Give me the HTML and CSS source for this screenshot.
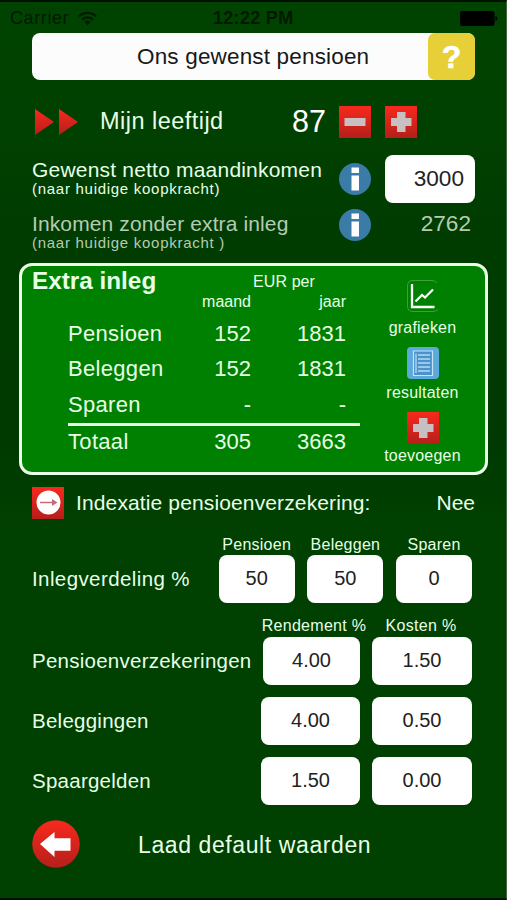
FILE: index.html
```html
<!DOCTYPE html>
<html lang="nl">
<head>
<meta charset="utf-8">
<title>Ons gewenst pensioen</title>
<link rel="stylesheet" href="styles.css">
</head>
<body>
<svg class="defs" width="0" height="0" aria-hidden="true">
  <defs>
    <linearGradient id="red" x1="0" y1="0" x2="0" y2="1">
      <stop offset="0" stop-color="#f8291d"/><stop offset="1" stop-color="#b51f1b"/>
    </linearGradient>
    <symbol id="plus" viewBox="0 0 32 32">
      <rect width="32" height="32" fill="url(#red)"/>
      <path d="M12 6h8.500v6h6v8h-6v6H12v-6H6v-8h6z" fill="#c8c0c0"/>
    </symbol>
    <symbol id="info" viewBox="0 0 32 32">
      <circle cx="16" cy="16" r="16" fill="#3a7ba8"/>
      <path d="M12.500 4.500h7.500v5.500h-7.500zM12.500 12.500h7.500v15h-7.500z" fill="#fff"/>
    </symbol>
  </defs>
</svg>
<div class="screen">
  <header class="status">
    <span class="carrier">Carrier</span>
    <svg class="wifi" width="19" height="15" viewBox="0 0 19 15">
      <path d="M1 5.300a12.200 12.200 0 0 1 17 0M4 8.600a7.800 7.800 0 0 1 11 0" fill="none" stroke="#001a00" stroke-width="2.300"/>
      <path d="M6.300 10.900a4.600 4.600 0 0 1 6.400 0L9.500 14.200z" fill="#001a00"/>
    </svg>
    <span class="clock">12:22 PM</span>
    <svg class="battery" width="38" height="15" viewBox="0 0 38 15"><rect width="34.500" height="15" rx="2.500"/><path d="M35.500 5a2.600 2.600 0 0 1 0 5z"/></svg>
  </header>

  <div class="title"><h1>Ons gewenst pensioen</h1><button class="help">?</button></div>

  <section class="age">
    <svg width="44" height="28" viewBox="0 0 44 28"><path d="M1 1l19 13L1 27zM25 1l19 13-19 13z" fill="url(#red)"/></svg>
    <span class="age-label">Mijn leeftijd</span>
    <span class="age-value">87</span>
    <svg width="32" height="32" viewBox="0 0 32 32"><rect width="32" height="32" fill="url(#red)"/><path d="M5.500 12h21v8h-21z" fill="#c8c0c0"/></svg>
    <svg class="age-plus" width="32" height="32"><use href="#plus"/></svg>
  </section>

  <section class="income">
    <div class="income-label"><span class="main m1">Gewenst netto maandinkomen</span><small>(naar huidige koopkracht)</small></div>
    <svg width="32" height="32"><use href="#info"/></svg>
    <div class="field amount">3000</div>
  </section>
  <section class="income dim">
    <div class="income-label"><span class="main m2">Inkomen zonder extra inleg</span><small>(naar huidige koopkracht )</small></div>
    <svg width="32" height="32"><use href="#info"/></svg>
    <div class="plain">2762</div>
  </section>

  <section class="card">
    <div class="figures">
      <div class="card-head"><h2>Extra inleg</h2><span class="eur">EUR per</span></div>
      <div class="line heads"><span></span><span>maand</span><span>jaar</span></div>
      <div class="line"><span>Pensioen</span><span>152</span><span>1831</span></div>
      <div class="line"><span>Beleggen</span><span>152</span><span>1831</span></div>
      <div class="line last"><span>Sparen</span><span>-</span><span>-</span></div>
      <div class="line total"><span>Totaal</span><span>305</span><span>3663</span></div>
    </div>
    <nav class="actions">
      <div class="action">
        <svg width="32" height="32" viewBox="0 0 32 32"><path d="M30 3Q28 .5 25 .5H6Q.5 .5 .5 6v20q0 5.500 5.500 5.500h20q3 0 5-2" fill="none" stroke="#4fa64f" stroke-width=".8"/><path d="M5 4v23h22.500" fill="none" stroke="#fff" stroke-width="2.300"/><path d="M8.500 21.500l6.500-6.500 3 2.500 8-8" fill="none" stroke="#fff" stroke-width="2.200"/></svg>
        <span>grafieken</span>
      </div>
      <div class="action results">
        <svg width="32" height="32" viewBox="0 0 32 32"><rect width="32" height="32" rx="4" fill="#5da9db"/><path d="M6.500 4h19v24.500h-19z" fill="#4b92cb" stroke="#c2e5fa" stroke-width="1.200"/><path d="M9 6.500V26M11 8h12M11 12h12M11 16h12M11 20h12M11 24h12" fill="none" stroke="#b3dcf7" stroke-width="1.300"/></svg>
        <span>resultaten</span>
      </div>
      <div class="action add">
        <svg width="32" height="32"><use href="#plus"/></svg>
        <span>toevoegen</span>
      </div>
    </nav>
  </section>

  <section class="index-row">
    <svg width="32" height="32" viewBox="0 0 32 32"><rect width="32" height="32" fill="url(#red)"/><circle cx="16.500" cy="15.500" r="12" fill="#fff"/><path d="M8 15.500h13" stroke="#c36c78" stroke-width="1.500"/><path d="M20 12l5.500 3.500L20 19z" fill="#c36c78"/></svg>
    <span class="index-label">Indexatie pensioenverzekering:</span>
    <span class="index-value">Nee</span>
  </section>

  <section class="split">
    <span class="row-label split-label">Inlegverdeling %</span>
    <label>Pensioen<span class="field">50</span></label>
    <label>Beleggen<span class="field">50</span></label>
    <label>Sparen<span class="field">0</span></label>
  </section>

  <section class="rates">
    <div class="rate-heads"><span>Rendement %</span><span>Kosten %</span></div>
    <div class="rate first"><span class="row-label">Pensioenverzekeringen</span><span class="field">4.00</span><span class="field">1.50</span></div>
    <div class="rate"><span class="row-label">Beleggingen</span><span class="field">4.00</span><span class="field">0.50</span></div>
    <div class="rate"><span class="row-label">Spaargelden</span><span class="field">1.50</span><span class="field">0.00</span></div>
  </section>

  <footer class="reset">
    <svg width="48" height="48" viewBox="0 0 48 48"><circle cx="24" cy="24" r="23.800" fill="url(#red)"/><path d="M8 24L22.500 12v6.300h16v12.500h-16V37z" fill="#fff"/></svg>
    <span>Laad default waarden</span>
  </footer>
</div>
</body>
</html>
```

FILE: styles.css
```css
* { box-sizing: border-box; }
body { margin: 0; background: #004000; font-family: "Liberation Sans", Arial, sans-serif; }
.defs { display: block; height: 0; }
svg { display: block; flex: none; }
h1, h2 { margin: 0; font-weight: 400; }
span, h1, h2 { white-space: nowrap; }
.screen {
  width: 507px; height: 900px; overflow: hidden;
  padding-left: 32px;
  border-top: 2px solid #001000; border-bottom: 2px solid #001000; border-right: 1px solid #406840;
  background: linear-gradient(#004300, #004000 140px, #003c00 230px, #003a00 440px, #004000 520px, #004000);
  color: #e6ffe6;
}
.status { display: flex; align-items: center; height: 31px; margin-left: -22px; padding-top: 1px; color: #001a00; font-size: 18px; }
.carrier { width: 68px; letter-spacing: .6px; }
.clock { margin-left: 116px; font-weight: 700; letter-spacing: .3px; }
.battery { margin-left: auto; margin-right: 8px; fill: #000; }
.title { display: flex; width: 443px; height: 47px; background: #fcfcfc; border-radius: 8px; color: #181818; }
.title h1 { flex: 1; padding-left: 105px; font-size: 22.500px; line-height: 47px; letter-spacing: .17px; }
.help { width: 47px; border: 0; border-radius: 7px; background: #e6cf37; color: #fff; font: 700 32px/46px "Liberation Sans", Arial, sans-serif; padding: 0; -webkit-text-stroke: .6px #fff; }
.age { display: flex; align-items: center; height: 32px; margin-top: 25.500px; padding-left: 2px; }
.age-label { width: 158px; margin-left: 22px; font-size: 23.500px; letter-spacing: .47px; }
.age-value { width: 68px; text-align: right; font-size: 30.500px; margin-right: 13px; color: #fff; }
.age-plus { margin-left: 14px; }
.income { display: flex; align-items: flex-start; margin-top: 17px; height: 47px; }
.income > svg { margin-top: 8.500px; }
.income-label { width: 307px; padding-top: 5.500px; }
.main { display: block; font-size: 21px; line-height: 20px; }
.m1 { letter-spacing: .2px; }
.m2 { letter-spacing: .12px; }
small { display: block; font-size: 15px; line-height: 17px; letter-spacing: .72px; }
.field { display: block; height: 48px; border-radius: 8px; background: #fff; color: #222; text-align: center; font-size: 20px; line-height: 47px; }
.amount { width: 90px; margin-left: 14px; padding-right: 11px; text-align: right; font-size: 22.600px; }
.dim { margin-top: 6.500px; color: #b4cbb4; }
.dim > svg { margin-top: .5px; }
.plain { width: 100px; text-align: right; font-size: 22.600px; line-height: 32px; }
.card {
  display: flex; width: 469px; height: 212px; margin: 7.500px 0 0 -13px;
  border: 3px solid #e8ffe8; border-radius: 13px; background: #008000;
}
.figures { width: 338px; padding-left: 10px; }
.card-head { display: flex; height: 25px; align-items: flex-start; }
.card-head h2 { width: 221px; font-size: 24.300px; font-weight: 700; line-height: 30px; }
.eur { font-size: 16px; line-height: 20px; letter-spacing: .1px; padding-top: 6px; }
.line { display: grid; grid-template-columns: 88px 95px 95px; column-gap: 0; margin-left: 36px; width: 292px; height: 35.500px; font-size: 22px; line-height: 36px; }
.line span:first-child { letter-spacing: .32px; }
.line span + span { text-align: right; }
.heads { height: 25px; font-size: 16px; line-height: 22px; }
.last { height: 39px; border-bottom: 3px solid #e8ffe8; line-height: 35px; }
.total { line-height: 32px; }
.actions { width: 125px; padding-top: 14.500px; }
.action { display: flex; flex-direction: column; align-items: center; height: 67px; font-size: 16px; letter-spacing: .2px; }
.action span { line-height: 20px; margin-top: 6px; }
.results span { margin-top: 4px; }
.add { margin-top: -2px; height: 60px; }
.add span { margin-top: 2px; }
.index-row { display: flex; align-items: center; height: 32px; margin-top: 12px; width: 443px; font-size: 21px; }
.index-label { margin-left: 12px; letter-spacing: .13px; }
.index-value { margin-left: auto; }
.row-label { font-size: 20.500px; letter-spacing: .25px; }
.split { display: grid; grid-template-columns: 174px 76px 76px 76px; column-gap: 12.700px; margin-top: 16px; height: 69px; }
.split-label { line-height: 47px; margin-top: 20px; letter-spacing: .4px; }
.split label { font-size: 16px; line-height: 20px; text-align: center; letter-spacing: .25px; }
.split .field { font-size: 20px; line-height: 47px; letter-spacing: 0; }
.rate-heads { display: grid; grid-template-columns: 108px 100px; column-gap: 3px; margin: 11px 0 0 228px; font-size: 16px; line-height: 22px; letter-spacing: .3px; text-align: center; }
.rate { display: grid; grid-template-columns: 229px 99px 100px; column-gap: 0; margin-bottom: 12px; }
.rate .field + .field { margin-left: 12px; width: 100px; }
.first .field:nth-child(2) { margin-left: 2px; }
.rate .row-label { line-height: 47px; }
.reset { display: flex; align-items: center; height: 48px; margin-top: 15.500px; font-size: 23px; }
.reset span { margin-left: 58px; padding-top: 2px; letter-spacing: .6px; }
```
